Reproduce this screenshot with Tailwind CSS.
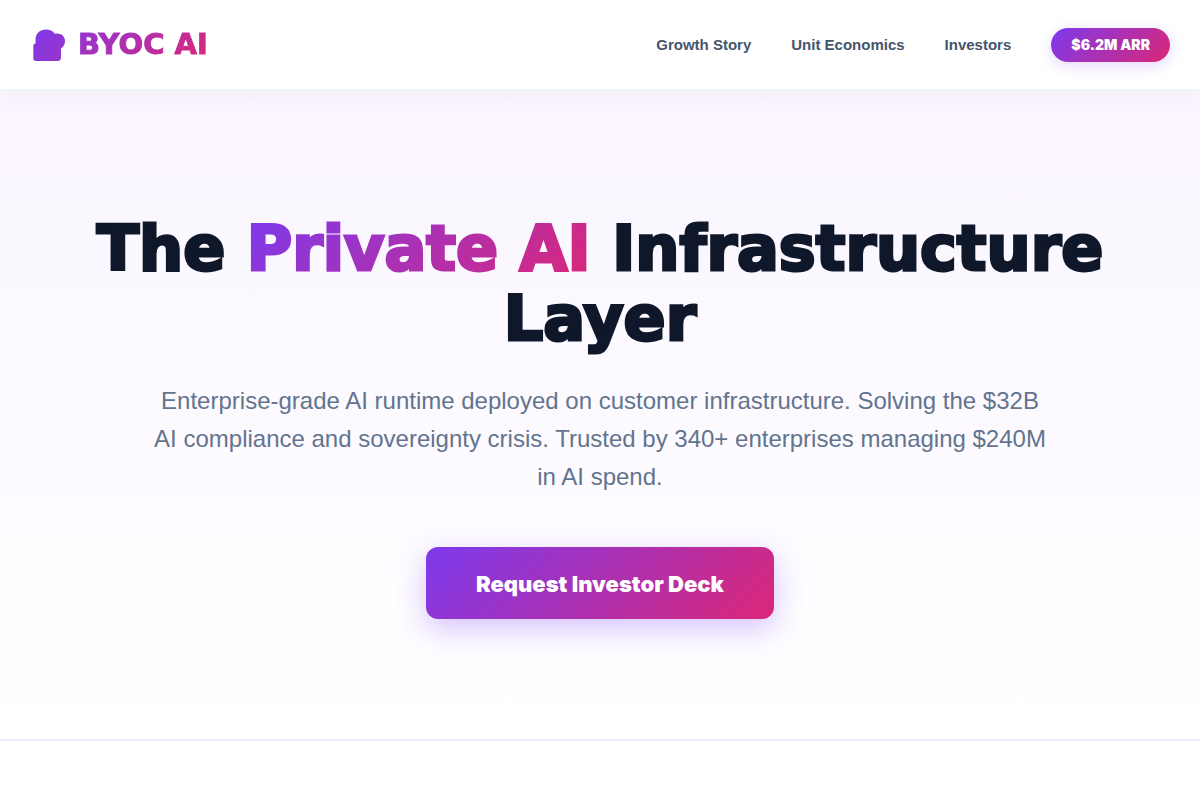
<!DOCTYPE html>
<html lang="en">
<head>
<meta charset="utf-8">
<meta name="viewport" content="width=device-width, initial-scale=1">
<title>BYOC AI</title>
<script src="https://cdn.jsdelivr.net/npm/@tailwindcss/browser@4"></script>
</head>
<body class="bg-white font-['Liberation_Sans',Arial,sans-serif] text-slate-900">
<header class="relative z-10 flex items-center justify-between border-b-2 border-slate-100 bg-white px-[30px] py-6 shadow-[0_4px_20px_rgba(0,0,0,0.04)]">
  <a href="#" class="flex items-center gap-3 bg-linear-135/srgb from-[#7c3aed] to-[#db2777] bg-clip-text font-['DejaVu_Sans',sans-serif] text-[29px]/[41px] font-black text-transparent [-webkit-text-stroke:1px_transparent]">
    <svg class="size-9" viewBox="0 0 36 36" aria-hidden="true">
      <defs><linearGradient id="mark" gradientUnits="userSpaceOnUse" x1="0" y1="0" x2="110" y2="110"><stop offset="0" stop-color="#7c3aed"/><stop offset="1" stop-color="#db2777"/></linearGradient></defs>
      <path fill="url(#mark)" d="M5.500 16.500V13C5.500 6.500 10 2.500 16 2.500c3.800 0 6.700 1.300 8.700 4.200C30.500 5.700 35 9 35 14c0 3.300-1.500 5.900-4 7.400V30.500c0 2-1.300 3.500-3.200 3.500H6c-1.800 0-2.700-1-2.700-2.700V19c0-1.300.800-2.200 2.200-2.500z"/>
    </svg>
    <span>BYOC AI</span>
  </a>
  <nav class="flex items-center gap-10 text-[15px] font-bold text-slate-600">
    <a href="#growth" class="pt-px">Growth Story</a>
    <a href="#economics" class="pt-px">Unit Economics</a>
    <a href="#investors" class="pt-px">Investors</a>
    <span class="rounded-full bg-linear-135/srgb from-[#7c3aed] to-[#db2777] px-5 py-2 font-[Inter,sans-serif] text-[14px]/[18px] font-black text-white shadow-[0_4px_15px_rgba(124,58,237,0.2)]">$6.2M ARR</span>
  </nav>
</header>
<main>
  <section class="border-b-2 border-purple-100 bg-linear-to-b/srgb from-purple-50 to-white px-[30px] py-[120px] text-center">
    <h1 class="mx-auto max-w-[1100px] pt-[3px] font-['DejaVu_Sans',sans-serif] text-[62px]/[70px] font-black [-webkit-text-stroke:3px_#0f172a]">The <span class="bg-linear-135/srgb from-[#7c3aed] to-[#db2777] bg-clip-text text-transparent [-webkit-text-stroke:3px_transparent]">Private AI</span> Infrastructure Layer</h1>
    <p class="mx-auto mt-7 max-w-[900px] text-2xl/[38px] text-slate-500">Enterprise-grade AI runtime deployed on customer infrastructure. Solving the $32B AI compliance and sovereignty crisis. Trusted by 340+ enterprises managing $240M in AI spend.</p>
    <button class="mx-auto mt-[51px] block rounded-xl bg-linear-135/srgb from-[#7c3aed] to-[#db2777] px-[50px] pt-[25px] pb-[23px] font-[Inter,sans-serif] text-[22px]/[24px] font-black text-white shadow-[0_10px_30px_rgba(124,58,237,0.3)]">Request Investor Deck</button>
  </section>
</main>
</body>
</html>
